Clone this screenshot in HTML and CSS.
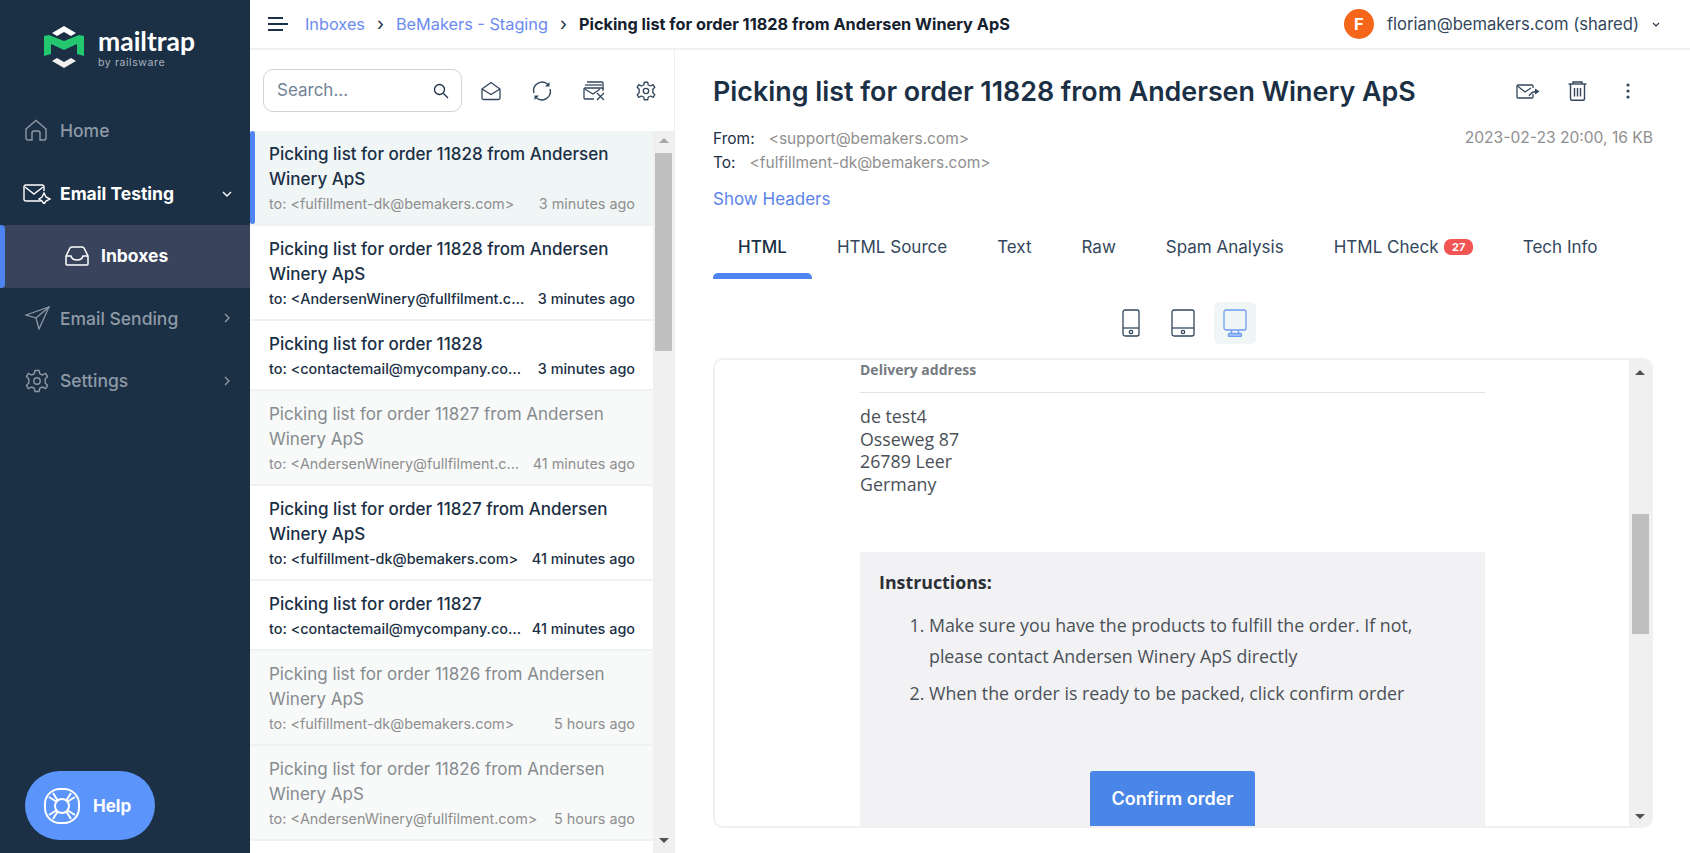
FILE: index.html
```html
<!DOCTYPE html>
<html lang="en">

<head>
  <meta charset="UTF-8">
  <meta name="viewport" content="width=device-width, initial-scale=1.0">
  <title>Picking list for order 11828 - Mailtrap</title>
  <link rel="stylesheet" href="styles.css">
</head>

<body>
  <aside class="sidebar">
    <div class="logo">
      <svg class="logo-mark" width="40" height="42" viewBox="0 0 40 42">
        <path d="M20 0 L32 7 L27 10 L20 6 L13 10 L8 7 Z" fill="#fff" />
        <path d="M0 10 L5 9 L20 15 L35 9 L40 10 V30 L33 28 V18 L20 24 L7 18 V28 L0 30 Z" fill="#22c76f" />
        <path d="M8 35 L13 32 L20 36 L27 32 L32 35 L20 42 Z" fill="#f1f1f1" />
      </svg>
      <div class="logo-text">
        <span class="logo-name">mailtrap</span>
        <span class="logo-by">by railsware</span>
      </div>
    </div>

    <nav class="nav">
      <a class="nav-item">
        <svg class="nav-icon" width="22" height="22" viewBox="0 0 22 22" fill="none" stroke="currentColor" stroke-width="1.4">
          <path d="M1 10 L11 1.5 L21 10 V19 Q21 21 19 21 H15 V14 Q15 12 13 12 H9 Q7 12 7 14 V21 H3 Q1 21 1 19 Z" />
        </svg>
        <span>Home</span>
      </a>
      <a class="nav-item active">
        <svg class="nav-icon wide" width="28" height="20" viewBox="0 0 28 20" fill="none" stroke="currentColor" stroke-width="1.4">
          <path d="M18 17 H3 Q1 17 1 15 V3 Q1 1 3 1 H19 Q21 1 21 3 V7" />
          <path d="M2 3 L11 10 L20 3" />
          <path d="M21 9 L23 13 L27 15 L23 17 L21 20 L19 17 L16 15 L19 13 Z" />
        </svg>
        <span>Email Testing</span>
        <svg class="nav-arrow" width="10" height="6" viewBox="0 0 10 6" fill="none" stroke="currentColor" stroke-width="1.4"><path d="M1 1 L5 5 L9 1" /></svg>
      </a>
      <a class="nav-sub">
        <svg width="24" height="20" viewBox="0 0 24 20" fill="none" stroke="currentColor" stroke-width="1.5">
          <path d="M1 10 L5 2 Q6 1 7 1 H17 Q18 1 19 2 L23 10 V18 Q23 19 22 19 H2 Q1 19 1 18 Z" />
          <path d="M1 10 H6 Q7 14 12 14 Q17 14 18 10 H23" />
        </svg>
        <span>Inboxes</span>
      </a>
      <a class="nav-item">
        <svg class="nav-icon" width="25" height="24" viewBox="0 0 25 24" fill="none" stroke="currentColor" stroke-width="1.3">
          <path d="M1 9 L24 1 L14 23 L11 12 Z" />
          <path d="M11 12 L24 1" />
        </svg>
        <span>Email Sending</span>
        <svg class="nav-arrow" width="6" height="10" viewBox="0 0 6 10" fill="none" stroke="currentColor" stroke-width="1.4"><path d="M1 1 L5 5 L1 9" /></svg>
      </a>
      <a class="nav-item">
        <svg class="nav-icon" width="24" height="24" viewBox="0 0 24 24" fill="none" stroke="currentColor" stroke-width="1.4">
          <circle cx="12" cy="12" r="3.2" />
          <path d="M10 1.5 H14 L14.8 4.8 L17.6 6 L20.6 4.3 L22.6 7.6 L20.2 10 V14 L22.6 16.4 L20.6 19.7 L17.6 18 L14.8 19.2 L14 22.5 H10 L9.2 19.2 L6.4 18 L3.4 19.7 L1.4 16.4 L3.8 14 V10 L1.4 7.6 L3.4 4.3 L6.4 6 L9.2 4.8 Z" stroke-linejoin="round" />
        </svg>
        <span>Settings</span>
        <svg class="nav-arrow" width="6" height="10" viewBox="0 0 6 10" fill="none" stroke="currentColor" stroke-width="1.4"><path d="M1 1 L5 5 L1 9" /></svg>
      </a>
    </nav>

    <button class="help-btn">
      <svg width="38" height="38" viewBox="0 0 38 38" fill="none" stroke="#fff" stroke-width="2">
        <circle cx="19" cy="19" r="7" />
        <rect x="2" y="2" width="34" height="34" rx="15" />
        <path d="M6 10 L14 15 M10 6 L15 14 M32 10 L24 15 M28 6 L23 14 M6 28 L14 23 M10 32 L15 24 M32 28 L24 23 M28 32 L23 24" />
      </svg>
      <span>Help</span>
    </button>
  </aside>

  <div class="main">
    <header class="topbar">
      <svg class="menu-icon" width="20" height="16" viewBox="0 0 20 16" fill="none" stroke="#1b2f45" stroke-width="2.2">
        <path d="M0 2 H15 M0 8 H20 M0 14 H15" />
      </svg>
      <a class="crumb">Inboxes</a>
      <span class="crumb-sep">›</span>
      <a class="crumb">BeMakers - Staging</a>
      <span class="crumb-sep">›</span>
      <strong class="crumb-current">Picking list for order 11828 from Andersen Winery ApS</strong>
      <div class="account">
        <span class="avatar">F</span>
        <span>florian@bemakers.com (shared)</span>
        <svg width="8" height="5" viewBox="0 0 8 5" fill="none" stroke="#1b2f45" stroke-width="1.1"><path d="M1 1 L4 4 L7 1" /></svg>
      </div>
    </header>

    <div class="columns">
      <section class="list-panel">
        <div class="list-tools">
          <div class="search">
            <span class="search-label">Search...</span>
            <svg width="16" height="16" viewBox="0 0 16 16" fill="none" stroke="#1b2f45" stroke-width="1.3">
              <circle cx="6.5" cy="6.5" r="5" />
              <path d="M10.5 10.5 L15 15" />
            </svg>
          </div>
          <svg class="tool-icon" width="20" height="20" viewBox="0 0 20 20" fill="none" stroke="#33475c" stroke-width="1.3">
            <path d="M1 8 L10 1.5 L19 8 V17 Q19 18.5 17.5 18.5 H2.5 Q1 18.5 1 17 Z" />
            <path d="M1 8 L10 13.5 L19 8" />
          </svg>
          <svg class="tool-icon" width="20" height="20" viewBox="0 0 20 20" fill="none" stroke="#33475c" stroke-width="1.4">
            <path d="M2 12 A8.5 8.5 0 0 1 16 3.5" />
            <path d="M18 8 A8.5 8.5 0 0 1 4 16.5" />
            <path d="M17.5 1 V5.5 H13 Z M2.5 19 V14.5 H7 Z" fill="#33475c" stroke="none" />
          </svg>
          <svg class="tool-icon" width="22" height="20" viewBox="0 0 22 20" fill="none" stroke="#33475c" stroke-width="1.3">
            <path d="M4 1 H19 Q20 1 20 2 V8" />
            <path d="M2 4 H19" />
            <path d="M11 18 H2 Q1 18 1 17 V8 Q1 7 2 7 H19 Q20 7 20 8 V10" />
            <path d="M1.5 8 L10 13 L17 8" />
            <path d="M14 12 L21 19 M21 12 L14 19" />
          </svg>
          <svg class="tool-icon" width="20" height="20" viewBox="0 0 24 24" fill="none" stroke="#33475c" stroke-width="1.6">
            <circle cx="12" cy="12" r="3.2" />
            <path d="M10 1.5 H14 L14.8 4.8 L17.6 6 L20.6 4.3 L22.6 7.6 L20.2 10 V14 L22.6 16.4 L20.6 19.7 L17.6 18 L14.8 19.2 L14 22.5 H10 L9.2 19.2 L6.4 18 L3.4 19.7 L1.4 16.4 L3.8 14 V10 L1.4 7.6 L3.4 4.3 L6.4 6 L9.2 4.8 Z" stroke-linejoin="round" />
          </svg>
        </div>

        <div class="list-body">
          <ul class="rows">
            <li class="row selected">
              <div class="row-title">Picking list for order 11828 from Andersen Winery ApS</div>
              <div class="row-meta"><span class="row-to">to: &lt;fulfillment-dk@bemakers.com&gt;</span><span class="row-time">3 minutes ago</span></div>
            </li>
            <li class="row unread">
              <div class="row-title">Picking list for order 11828 from Andersen Winery ApS</div>
              <div class="row-meta"><span class="row-to">to: &lt;AndersenWinery@fullfilment.com&gt;</span><span class="row-time">3 minutes ago</span></div>
            </li>
            <li class="row unread">
              <div class="row-title">Picking list for order 11828</div>
              <div class="row-meta"><span class="row-to">to: &lt;contactemail@mycompany.com&gt;</span><span class="row-time">3 minutes ago</span></div>
            </li>
            <li class="row read">
              <div class="row-title">Picking list for order 11827 from Andersen Winery ApS</div>
              <div class="row-meta"><span class="row-to">to: &lt;AndersenWinery@fullfilment.com&gt;</span><span class="row-time">41 minutes ago</span></div>
            </li>
            <li class="row unread">
              <div class="row-title">Picking list for order 11827 from Andersen Winery ApS</div>
              <div class="row-meta"><span class="row-to">to: &lt;fulfillment-dk@bemakers.com&gt;</span><span class="row-time">41 minutes ago</span></div>
            </li>
            <li class="row unread">
              <div class="row-title">Picking list for order 11827</div>
              <div class="row-meta"><span class="row-to">to: &lt;contactemail@mycompany.com&gt;</span><span class="row-time">41 minutes ago</span></div>
            </li>
            <li class="row read">
              <div class="row-title">Picking list for order 11826 from Andersen Winery ApS</div>
              <div class="row-meta"><span class="row-to">to: &lt;fulfillment-dk@bemakers.com&gt;</span><span class="row-time">5 hours ago</span></div>
            </li>
            <li class="row read">
              <div class="row-title">Picking list for order 11826 from Andersen Winery ApS</div>
              <div class="row-meta"><span class="row-to">to: &lt;AndersenWinery@fullfilment.com&gt;</span><span class="row-time">5 hours ago</span></div>
            </li>
          </ul>
          <div class="scrollbar list-scroll">
            <span class="arrow-up"></span>
            <span class="thumb"></span>
            <span class="arrow-down"></span>
          </div>
        </div>
      </section>

      <section class="message">
        <div class="msg-head">
          <h1>Picking list for order 11828 from Andersen Winery ApS</h1>
          <div class="msg-actions">
            <svg width="24" height="15" viewBox="0 0 24 15" fill="none" stroke="#33475c" stroke-width="1.3">
              <path d="M17 10 V13 Q17 14 16 14 H2 Q1 14 1 13 V2 Q1 1 2 1 H16 Q17 1 17 2 V4" />
              <path d="M1.5 2 L9 8 L15 4" />
              <path d="M13 12 Q15 8 20 7.5" />
              <path d="M19 4.5 L23.5 7.5 L19 10.5 Z" fill="#33475c" stroke="none" />
            </svg>
            <svg width="19" height="20" viewBox="0 0 19 20" fill="none" stroke="#33475c" stroke-width="1.4">
              <path d="M0.5 3 H18.5" />
              <path d="M5 3 V1 H14 V3" />
              <path d="M2.5 3 V17.5 Q2.5 19.3 4.3 19.3 H14.7 Q16.5 19.3 16.5 17.5 V3" />
              <path d="M6.5 7 V15.5 M9.5 7 V15.5 M12.5 7 V15.5" />
            </svg>
            <svg class="msg-more" width="4" height="16" viewBox="0 0 4 16" fill="#33475c">
              <circle cx="2" cy="2" r="1.6" />
              <circle cx="2" cy="8" r="1.6" />
              <circle cx="2" cy="14" r="1.6" />
            </svg>
          </div>
        </div>

        <div class="msg-info">
          <div class="msg-addr">
            <div class="addr-line"><span class="addr-label">From:</span><span class="addr-value">&lt;support@bemakers.com&gt;</span></div>
            <div class="addr-line"><span class="addr-label">To:</span><span class="addr-value">&lt;fulfillment-dk@bemakers.com&gt;</span></div>
          </div>
          <div class="msg-date">2023-02-23 20:00, 16 KB</div>
        </div>
        <a class="show-headers">Show Headers</a>

        <div class="tabs">
          <a class="tab current">HTML</a>
          <a class="tab">HTML Source</a>
          <a class="tab">Text</a>
          <a class="tab">Raw</a>
          <a class="tab">Spam Analysis</a>
          <a class="tab">HTML Check <span class="badge">27</span></a>
          <a class="tab">Tech Info</a>
        </div>

        <div class="devices">
          <span class="device">
            <svg width="18" height="28" viewBox="0 0 18 28" fill="none" stroke="#33475c" stroke-width="1.3">
              <rect x="1" y="1" width="16" height="26" rx="2" />
              <path d="M1 19 H17" />
              <circle cx="9" cy="23" r="1.7" />
            </svg>
          </span>
          <span class="device">
            <svg width="24" height="28" viewBox="0 0 24 28" fill="none" stroke="#33475c" stroke-width="1.3">
              <rect x="1" y="1" width="22" height="26" rx="2" />
              <path d="M1 19 H23" />
              <circle cx="12" cy="23" r="1.7" />
            </svg>
          </span>
          <span class="device on">
            <svg width="24" height="28" viewBox="0 0 24 28" fill="none" stroke="#6f9cf5" stroke-width="1.3">
              <rect x="1" y="1" width="22" height="20" rx="2" />
              <path d="M9 21 L8 25 M15 21 L16 25" />
              <rect x="5.5" y="24.5" width="13" height="3" rx="1" fill="#a9c4f8" />
            </svg>
          </span>
        </div>

        <div class="preview">
          <div class="preview-body">
            <div class="mail">
              <div class="mail-heading">Delivery address</div>
              <p class="mail-address">de test4<br>Osseweg 87<br>26789 Leer<br>Germany</p>
              <div class="mail-box">
                <div class="mail-box-title">Instructions:</div>
                <ol class="mail-steps">
                  <li>Make sure you have the products to fulfill the order. If not, please contact Andersen Winery ApS directly</li>
                  <li>When the order is ready to be packed, click confirm order</li>
                </ol>
                <a class="confirm-btn">Confirm order</a>
              </div>
            </div>
          </div>
          <div class="scrollbar preview-scroll">
            <span class="arrow-up"></span>
            <span class="thumb"></span>
            <span class="arrow-down"></span>
          </div>
        </div>
      </section>
    </div>
  </div>
</body>

</html>
```

FILE: styles.css
```css
* {
  box-sizing: border-box;
}

html, body {
  margin: 0;
  padding: 0;
  height: 100%;
  overflow: hidden;
}

body {
  display: flex;
  background: #fff;
  color: #1b2f45;
  font-family: Inter, "Noto Sans", sans-serif;
  font-size: 16px;
}

/* sidebar */
.sidebar {
  width: 250px;
  flex-shrink: 0;
  height: 853px;
  display: flex;
  flex-direction: column;
  background: #1b2f45;
}

.logo {
  display: flex;
  align-items: center;
  gap: 14px;
  height: 100px;
  padding: 0 0 6px 44px;
}

.logo-text {
  display: flex;
  flex-direction: column;
  color: #fff;
}

.logo-name {
  font-family: Lato, sans-serif;
  font-size: 26.5px;
  line-height: 30px;
  font-weight: 700;
}

.logo-by {
  font-size: 10.5px;
  line-height: 13px;
  letter-spacing: 0.6px;
  color: #a9b2bc;
}

.nav {
  display: flex;
  flex-direction: column;
}

.nav-item {
  display: grid;
  grid-template-columns: 35px 1fr 10px;
  align-items: center;
  height: 62.5px;
  padding: 0 18px 2px 25px;
  color: #8e9aa6;
  font-size: 17.5px;
  font-weight: 500;
}

.nav-item.active {
  padding-bottom: 0;
  color: #fff;
  font-weight: 700;
}

.nav-icon.wide {
  margin-left: -2px;
}

.nav-arrow {
  justify-self: center;
}

.nav-sub {
  position: relative;
  display: flex;
  align-items: center;
  gap: 12px;
  height: 63px;
  padding: 0 0 2px 65px;
  background: #39435c;
  color: #fff;
  font-size: 17.5px;
  font-weight: 700;
}

.nav-sub::before {
  content: "";
  position: absolute;
  left: 0;
  top: 0;
  bottom: 0;
  width: 5px;
  border-radius: 0 4px 4px 0;
  background: #4d84f0;
}

.help-btn {
  display: flex;
  align-items: center;
  gap: 12px;
  width: 130px;
  height: 69px;
  margin: auto 0 13px 25px;
  padding: 0 0 0 18px;
  border: none;
  border-radius: 35px;
  background: #5b94fb;
  color: #fff;
  font-family: inherit;
  font-size: 17px;
  font-weight: 700;
}

/* top bar */
.main {
  flex: 1;
  min-width: 0;
  display: flex;
  flex-direction: column;
  height: 853px;
}

.topbar {
  display: flex;
  align-items: center;
  height: 50px;
  padding: 0 30px 0 18px;
  border-bottom: 2px solid #f0f0f0;
  flex-shrink: 0;
  font-size: 16.3px;
}

.menu-icon {
  margin-right: 17px;
}

.crumb {
  color: #6b8bf0;
}

.crumb-sep {
  width: 31px;
  text-align: center;
  font-size: 18px;
  line-height: 18px;
}

.crumb-current {
  font-weight: 700;
  color: #14202e;
}

.account {
  margin-left: auto;
  display: flex;
  align-items: center;
  gap: 13px;
  color: #33475c;
  font-size: 16.6px;
}

.avatar {
  width: 30px;
  height: 30px;
  border-radius: 50%;
  background: #f5661b;
  color: #fff;
  font-weight: 700;
  text-align: center;
  line-height: 30px;
}

.columns {
  flex: 1;
  min-height: 0;
  display: flex;
}

/* list of messages */
.list-panel {
  width: 425px;
  flex-shrink: 0;
  display: flex;
  flex-direction: column;
  border-right: 1px solid #eee;
}

.list-tools {
  display: flex;
  align-items: center;
  height: 81px;
  padding-left: 13px;
  flex-shrink: 0;
}

.search {
  display: flex;
  align-items: center;
  justify-content: space-between;
  flex-shrink: 0;
  width: 199px;
  height: 43px;
  padding: 0 12px 0 13px;
  border: 1px solid #d2d2d2;
  border-radius: 10px;
  margin-right: 19px;
}

.search-label {
  padding-bottom: 2px;
  color: #728396;
  font-size: 17px;
}

.tool-icon {
  flex-shrink: 0;
  margin-right: 31px;
}

.tool-icon:last-child {
  margin-right: 0;
}

.list-body {
  flex: 1;
  min-height: 0;
  display: flex;
}

.rows {
  flex: 1;
  min-width: 0;
  margin: 0;
  padding: 0;
  list-style: none;
}

.row {
  position: relative;
  padding: 11px 18px 9px 19px;
  border-bottom: 2px solid #f0f1f1;
}

.row-title {
  font-size: 17px;
  line-height: 25px;
  font-weight: 500;
  color: #1b2f45;
}

.row-meta {
  display: flex;
  justify-content: space-between;
  gap: 8px;
  font-size: 14.4px;
  line-height: 23px;
}

.row-to {
  flex: 1;
  min-width: 0;
  overflow: hidden;
  white-space: nowrap;
  text-overflow: ellipsis;
}

.row-time {
  flex-shrink: 0;
}

.row.selected {
  background: #f0f5f6;
}

.row.selected::before {
  content: "";
  position: absolute;
  left: 0;
  top: 0;
  bottom: 0;
  width: 5px;
  border-radius: 4px;
  background: #4d84f0;
}

.row.selected .row-meta {
  color: #8f8f8f;
}

.row.unread .row-meta {
  font-weight: 500;
  color: #1b2f45;
}

.row.read {
  background: #f8f9f9;
}

.row.read .row-title {
  font-weight: 400;
  color: #868b8f;
}

.row.read .row-meta {
  color: #8f8f8f;
}

/* fake scrollbars */
.scrollbar {
  position: relative;
  display: flex;
  flex-direction: column;
  align-items: center;
  flex-shrink: 0;
  background: #f0f0f0;
}

.list-scroll {
  width: 21px;
}

.preview-scroll {
  width: 22px;
}

.thumb {
  display: block;
  width: 17px;
  background: #bfbfbf;
}

.list-scroll .thumb {
  height: 198px;
}

.preview-scroll .thumb {
  height: 120px;
  margin-top: 139px;
}

.arrow-up, .arrow-down {
  display: block;
  width: 0;
  height: 0;
  border-left: 5px solid transparent;
  border-right: 5px solid transparent;
}

.arrow-up {
  margin: 7px 0 10px;
  border-bottom: 5px solid #a6a6a6;
}

.arrow-down {
  position: absolute;
  bottom: 7px;
  border-top: 5px solid #505050;
}

.preview-scroll .arrow-up {
  border-bottom-color: #505050;
  margin: 10px 0 0;
}

.list-scroll .arrow-down {
  bottom: 10px;
}

/* message */
.message {
  flex: 1;
  min-width: 0;
  display: flex;
  flex-direction: column;
  padding: 0 37px 25px 38px;
}

.msg-head {
  display: flex;
  align-items: center;
  justify-content: space-between;
  height: 70px;
  padding-top: 12px;
  flex-shrink: 0;
}

.msg-head h1 {
  margin: 0;
  font-size: 26.85px;
  font-weight: 600;
  color: #1b2f45;
}

.msg-actions {
  display: flex;
  align-items: center;
  gap: 28px;
  padding-right: 23px;
}

.msg-more {
  margin-left: 11px;
}

.msg-info {
  display: flex;
  justify-content: space-between;
  margin-top: 6px;
}

.addr-line {
  display: flex;
  height: 24px;
  align-items: center;
  font-size: 15.5px;
}

.addr-value {
  margin-left: 14px;
  color: #8f8f8f;
  font-size: 15.5px;
}

.msg-date {
  color: #8f8f8f;
  font-size: 15.6px;
  line-height: 24px;
}

.show-headers {
  margin-top: 13px;
  color: #5b83e8;
  font-size: 17px;
  line-height: 24px;
}

.tabs {
  display: flex;
  margin-top: 16px;
  height: 52px;
  flex-shrink: 0;
}

.tab {
  display: flex;
  align-items: flex-start;
  gap: 6px;
  padding: 8px 25px 0;
  height: 52px;
  color: #33475c;
  font-size: 17px;
  line-height: 24px;
  white-space: nowrap;
}

.tab.current {
  position: relative;
  font-weight: 500;
  color: #1b2f45;
}

.tab.current::after {
  content: "";
  position: absolute;
  left: 0;
  right: 0;
  bottom: 0;
  height: 6px;
  border-radius: 5px 5px 0 0;
  background: #4d84f0;
}

.badge {
  margin-top: 4px;
  padding: 0 7.5px;
  border-radius: 7px;
  background: #f25353;
  color: #fff;
  font-size: 11px;
  font-weight: 700;
  line-height: 16px;
}

.devices {
  display: flex;
  justify-content: center;
  gap: 10px;
  height: 42px;
  margin-top: 23px;
  flex-shrink: 0;
}

.device {
  display: flex;
  align-items: center;
  justify-content: center;
  width: 42px;
  height: 42px;
  border-radius: 5px;
}

.device.on {
  background: #f0f5f6;
}

.preview {
  flex: 1;
  min-height: 0;
  margin-top: 14px;
  display: flex;
  overflow: hidden;
  border: 2px solid #f0f0f0;
  border-radius: 10px;
}

.preview-body {
  flex: 1;
  min-width: 0;
  overflow: hidden;
  padding-left: 145px;
  font-family: "Open Sans", sans-serif;
}

.mail {
  width: 625px;
  color: #4a5057;
}

.mail-heading {
  padding-bottom: 12px;
  font-size: 14px;
  line-height: 20px;
  font-weight: 700;
  color: #757a80;
  border-bottom: 1px solid #e2e2e2;
}

.mail-address {
  margin: 12px 0 0;
  font-size: 17.8px;
  line-height: 22.7px;
}

.mail-box {
  margin-top: 56px;
  padding: 18px 19px 0;
  height: 300px;
  background: #f2f2f4;
  font-size: 17.8px;
}

.mail-box-title {
  font-weight: 700;
  line-height: 24px;
  color: #2b3036;
}

.mail-steps {
  margin: 16px 0 0;
  padding: 0 50px;
  line-height: 31px;
}

.mail-steps li {
  margin-bottom: 6px;
}

.confirm-btn {
  display: block;
  width: 165px;
  margin: 62px auto 0;
  padding: 16px 0 20px;
  background: #4a86e8;
  border-radius: 3px;
  color: #fff;
  font-family: Inter, sans-serif;
  font-size: 18px;
  line-height: 24px;
  font-weight: 600;
  text-align: center;
}
```
